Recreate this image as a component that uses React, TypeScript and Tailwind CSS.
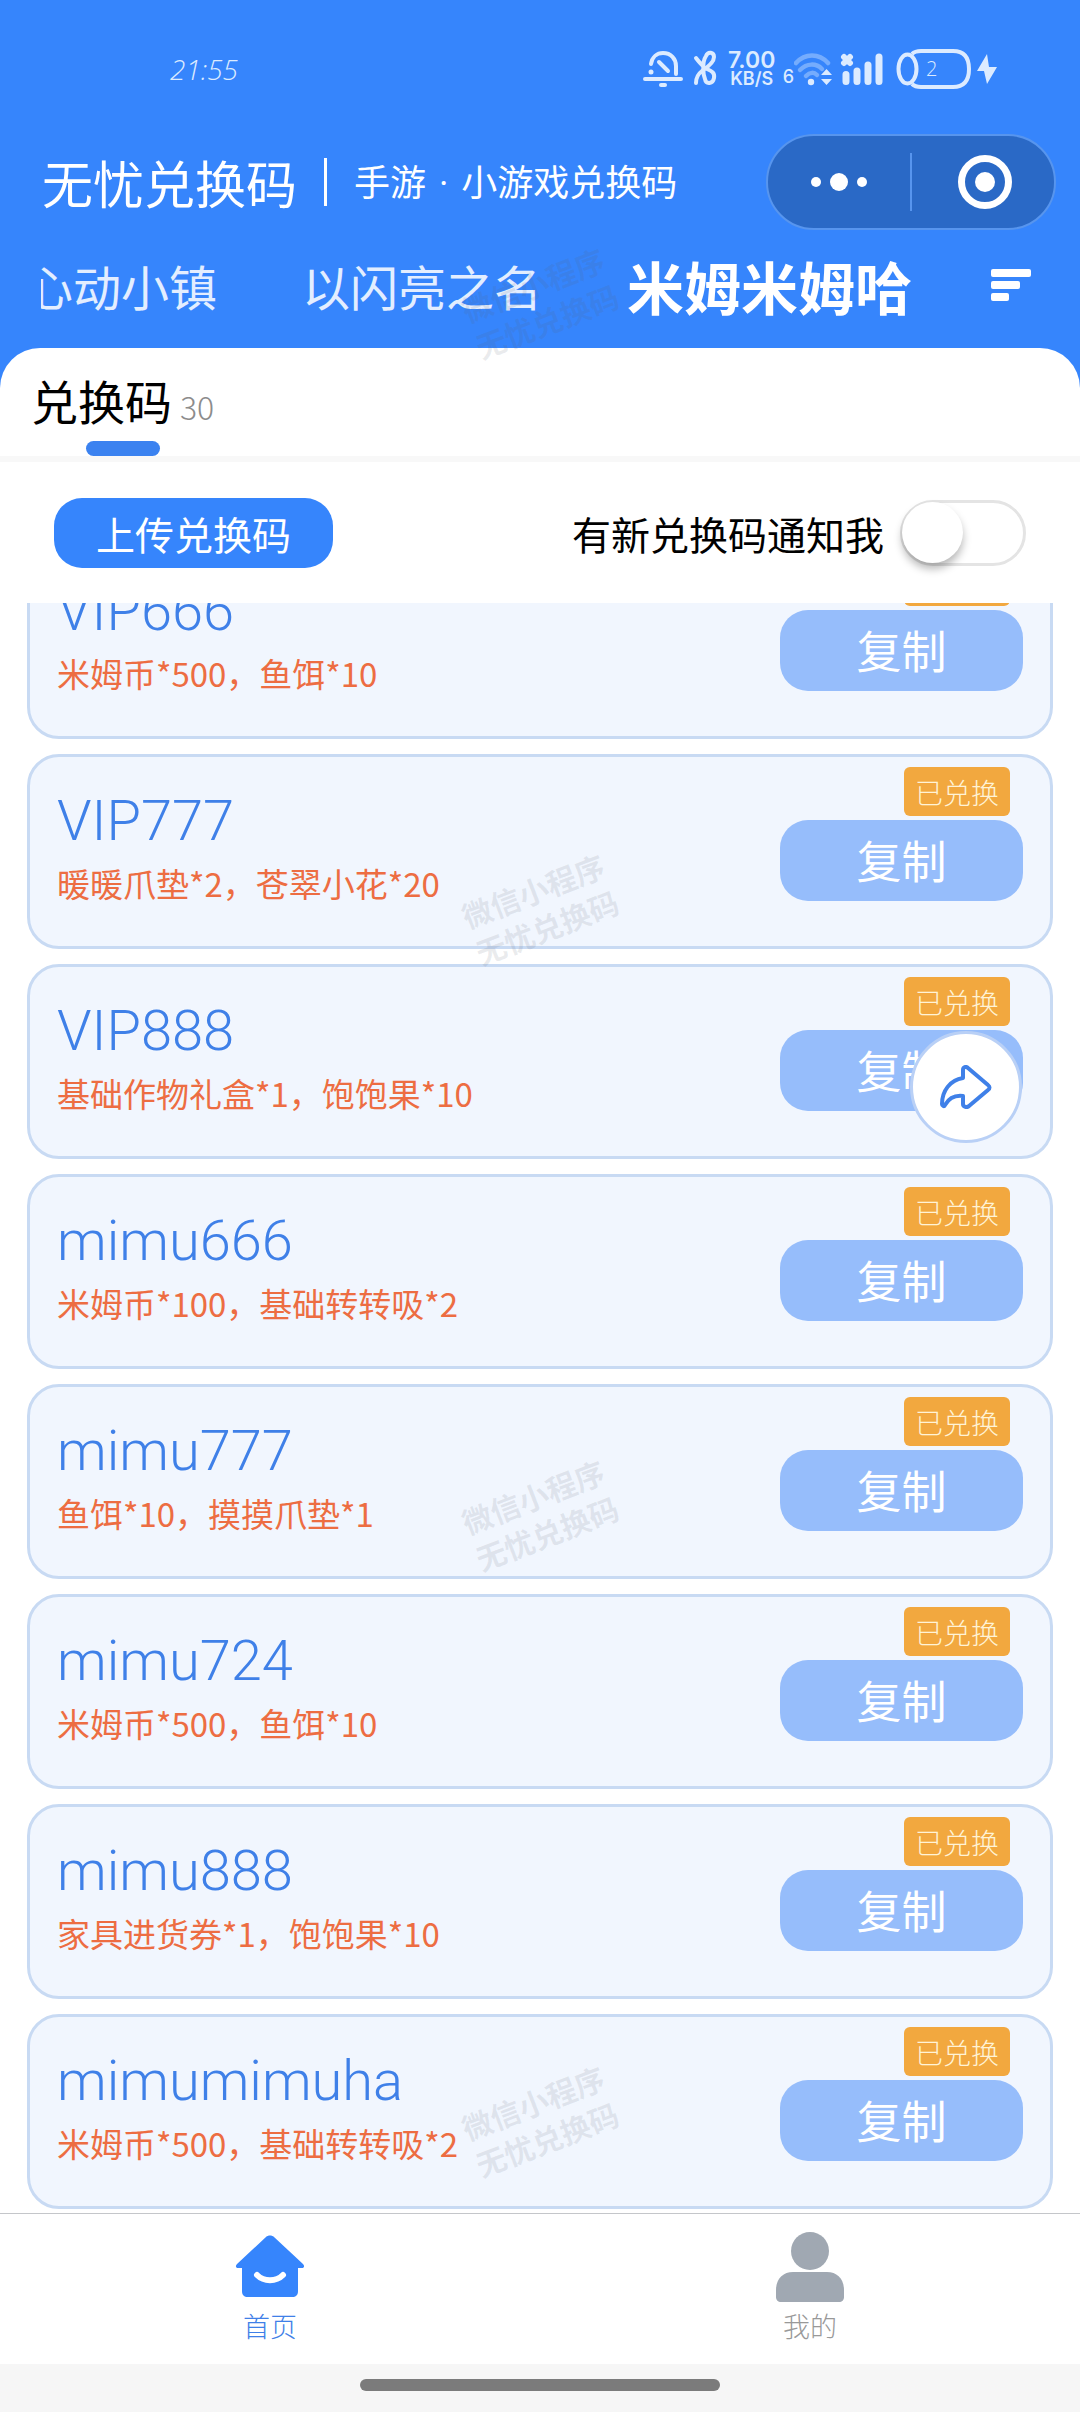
import { useState } from "react";

const games = ["心动小镇", "以闪亮之名", "米姆米姆哈"];

const codes = [
  { code: "VIP666", reward: "米姆币*500，鱼饵*10" },
  { code: "VIP777", reward: "暖暖爪垫*2，苍翠小花*20" },
  { code: "VIP888", reward: "基础作物礼盒*1，饱饱果*10" },
  { code: "mimu666", reward: "米姆币*100，基础转转吸*2" },
  { code: "mimu777", reward: "鱼饵*10，摸摸爪垫*1" },
  { code: "mimu724", reward: "米姆币*500，鱼饵*10" },
  { code: "mimu888", reward: "家具进货券*1，饱饱果*10" },
  { code: "mimumimuha", reward: "米姆币*500，基础转转吸*2" },
];

function StatusBar() {
  return (
    <div className="flex h-[134px] items-center justify-between pt-1 pr-[83px] pl-[170px] text-[#dcebff]">
      <span className="font-['Open_Sans','Liberation_Sans',sans-serif] text-[28px] font-light italic">
        21:55
      </span>
      <div className="flex items-center">
        {/* muted bell */}
        <svg className="h-[38px] w-10" viewBox="0 0 40 38" fill="none" stroke="currentColor" strokeWidth="4" strokeLinecap="round">
          <path d="M8 14C9 7 14 3 20 3c8 0 13 6 13 13v8M16 12l9 9M2 29h36" />
          <path d="M18 35h4" />
          <circle cx="8" cy="22" r="2.5" fill="currentColor" stroke="none" />
        </svg>
        {/* bluetooth */}
        <svg className="ml-2.5 h-[38px] w-6" viewBox="0 0 24 38" fill="none" stroke="currentColor" strokeWidth="4" strokeLinecap="round" strokeLinejoin="round">
          <path d="M3 8c3 4 6 8 11 11 5 2 8 4 7 9-1 6-8 7-9 1C10 24 9 12 13 6c2-5 8-4 8 1 0 5-6 10-12 14-4 3-6 7-6 12" />
        </svg>
        <span className="ml-2.5 flex w-[50px] flex-col items-center font-['Inter','Liberation_Sans',sans-serif] font-semibold">
          <span className="text-[23px] leading-[19px]">7.00</span>
          <span className="text-[18px] leading-[17px]">KB/S</span>
        </span>
        <span className="ml-1.5 mt-4 font-['Inter','Liberation_Sans',sans-serif] text-[18px] leading-4 font-medium">
          6
        </span>
        {/* wifi */}
        <svg className="h-[34px] w-[38px]" viewBox="2 0 38 34" fill="none">
          <g stroke="currentColor" strokeWidth="4.5" strokeLinecap="round" opacity="0.38">
            <path d="M4 11c9-10 23-10 32 0" />
            <path d="M8 18c7-7 16-7 22-1" />
            <path d="M14 24c4-4 8-4 11-1" />
          </g>
          <circle cx="19" cy="30" r="3.2" fill="currentColor" />
          <path d="M29 23l5.500-6 5.500 6zM29 27l5.500 6 5.500-6z" fill="currentColor" />
        </svg>
        {/* signal */}
        <svg className="ml-2 h-8 w-11" viewBox="0 0 44 32" fill="none" stroke="currentColor" strokeWidth="7" strokeLinecap="round">
          <path d="M6 21.500v7M17 18v10.500M28 12v16.500M39 4v24.500" />
          <path d="M4 4l6 6M10 4l-6 6" strokeWidth="6" />
        </svg>
        {/* battery */}
        <svg className="ml-3 h-10 w-[75px]" viewBox="0 0 75 40" fill="none" stroke="currentColor" strokeWidth="4">
          <path d="M16 5c2-2 5-3 9-3h32c10 0 16 5 16 18s-6 18-16 18H25c-4 0-7-1-9-3" />
          <ellipse cx="11.500" cy="20" rx="9" ry="14.500" />
          <text x="30" y="27" fill="currentColor" stroke="none" fontSize="20" fontWeight="300" fontFamily="'Open Sans', sans-serif">
            2
          </text>
        </svg>
        <svg className="ml-1.5 h-8 w-5" viewBox="0 0 20 32" fill="currentColor">
          <path d="M10 1L0 18h7l3 13 10-17h-8z" />
        </svg>
      </div>
    </div>
  );
}

function Header() {
  return (
    <header className="text-white">
      <StatusBar />
      <div className="flex h-24 items-center pr-6 pl-[42px]">
        <h1 className="text-[51px] leading-[60px]">无忧兑换码</h1>
        <span className="ml-[27px] h-12 w-[3px] bg-white" />
        <p className="ml-[27px] flex-1 text-[36px] leading-[48px]">
          手游<span className="px-1 font-['Roboto',sans-serif]"> · </span>小游戏兑换码
        </p>
        <div className="flex h-full w-[290px] items-center rounded-full border-2 border-[#5795ee] bg-[#2a69c6]">
          <button type="button" aria-label="更多" className="flex flex-1 items-center justify-center gap-[9px]">
            <span className="size-2.5 rounded-full bg-white" />
            <span className="size-[18px] rounded-full bg-white" />
            <span className="size-2.5 rounded-full bg-white" />
          </button>
          <span className="h-[58px] w-0.5 bg-[#5795ee]" />
          <button type="button" aria-label="关闭" className="flex flex-1 items-center justify-center">
            <span className="ml-1 flex size-[54px] items-center justify-center rounded-full border-[7px] border-white">
              <span className="size-5 rounded-full bg-white" />
            </span>
          </button>
        </div>
      </div>
      <div className="flex h-[118px] items-center pr-[49px] pb-2 pl-[41px]">
        <nav className="flex flex-1 items-center justify-end gap-[85px] overflow-hidden pr-[79px]">
          {games.map((game, i) => (
            <a
              key={game}
              href="#"
              className={
                i === games.length - 1
                  ? "shrink-0 text-[57px] leading-[72px] font-bold"
                  : "shrink-0 text-[48px] leading-[72px] text-[#e3eeff]"
              }
            >
              {game}
            </a>
          ))}
        </nav>
        <button type="button" aria-label="全部游戏" className="flex w-10 flex-col gap-1">
          <span className="h-2 w-10 rounded-xs bg-white" />
          <span className="h-2 w-[29px] rounded-xs bg-white" />
          <span className="h-2 w-[18px] rounded-xs bg-white" />
        </button>
      </div>
    </header>
  );
}

function Toolbar() {
  const [notify, setNotify] = useState(false);

  return (
    <div className="flex h-[141px] items-center justify-between px-[54px]">
      <button type="button" className="h-[70px] w-[279px] rounded-[28px] bg-[#3685fc] text-[39px] leading-[48px] text-white">
        上传兑换码
      </button>
      <label className="flex items-center gap-4 text-[39px] leading-[48px] text-black">
        有新兑换码通知我
        <span className="relative">
          <input
            type="checkbox"
            role="switch"
            checked={notify}
            onChange={(e) => setNotify(e.target.checked)}
            className="peer block h-[66px] w-[126px] appearance-none rounded-full border-3 border-[#e4e4e4] bg-white checked:bg-[#3685fc]"
          />
          <span className="absolute top-0.5 left-0.5 size-[61px] rounded-full bg-white shadow-[0_6px_8px_rgba(0,0,0,0.28)] peer-checked:left-[63px]" />
        </span>
      </label>
    </div>
  );
}

function CodeCard({ code, reward }: { code: string; reward: string }) {
  return (
    <li className="flex shrink-0 justify-between rounded-[32px] border-3 border-[#c8daf3] bg-[#f1f6fe] pt-2.5 pr-[27px] pb-[39px] pl-[27px]">
      <div className="pt-6">
        <h2 className="font-['Roboto',sans-serif] text-[56px] leading-[60px] font-light text-[#3f80e8]">{code}</h2>
        <p className="mt-2 text-[33px] leading-[48px] text-[#ed6d42]">{reward}</p>
      </div>
      <div className="flex flex-col items-end gap-1">
        <span className="mr-[13px] flex h-[49px] w-[106px] items-center justify-center rounded-md bg-[#f2a83f] text-[28px] leading-9 font-light text-[#fff3d6]">
          已兑换
        </span>
        <button type="button" className="h-[81px] w-[243px] rounded-[28px] bg-[#96bdfb] pb-0.5 text-[45px] leading-[60px] text-white">
          复制
        </button>
      </div>
    </li>
  );
}

function ShareButton() {
  return (
    <button
      type="button"
      aria-label="分享"
      className="fixed right-[58px] bottom-[1269px] flex size-28 items-center justify-center rounded-full border-3 border-[#b9d0f6] bg-white"
    >
      <svg className="h-11 w-[52px]" viewBox="0 0 52 44" fill="none" stroke="#3f80e8" strokeWidth="4" strokeLinejoin="round">
        <path d="M23 5c0-3 3-4 5-2l20 17c2 1.500 2 3.500 0 5L29 41c-2 2-6 1-6-2v-8c-8-1-14 2-18 9-1 2-3 1-3-1 0-13 8-24 21-26z" />
      </svg>
    </button>
  );
}

function TabBar() {
  return (
    <footer>
      <nav className="flex h-[151px] border-t border-[#c4c6ca] bg-white text-[27px] leading-8 font-light">
        <a href="#" className="flex flex-1 flex-col items-center pt-[18px] text-[#3f80e8]">
          <svg className="h-[70px] w-[70px]" viewBox="0 0 70 70">
            <path
              d="M31 5c2-2 6-2 8 0l29 27c2 2 1 4-1 4h-4v23c0 4-2 6-6 6H13c-4 0-6-2-6-6V36H3c-2 0-3-2-1-4z"
              fill="#3685fc"
            />
            <path d="M22 43c7 7 19 7 26 0" fill="none" stroke="#fff" strokeWidth="6" strokeLinecap="round" />
          </svg>
          <span className="mt-2">首页</span>
        </a>
        <a href="#" className="flex flex-1 flex-col items-center pt-[18px] text-[#999]">
          <svg className="h-[70px] w-[70px]" viewBox="0 0 70 70" fill="#a0a8b2">
            <circle cx="35" cy="19" r="19" />
            <path d="M18 40h34c10 0 17 7 17 18v7c0 3-2 5-5 5H6c-3 0-5-2-5-5v-7c0-11 7-18 17-18z" />
          </svg>
          <span className="mt-2">我的</span>
        </a>
      </nav>
      <div className="flex h-12 items-center justify-center bg-[#f6f6f6] pb-1.5">
        <span className="h-3 w-1/3 rounded-full bg-[#7b7b7b]" />
      </div>
    </footer>
  );
}

function Watermark() {
  return (
    <div aria-hidden="true" className="pointer-events-none absolute inset-0 flex flex-col items-center overflow-hidden">
      {[0, 1, 2, 3].map((n) => (
        <div key={n} className="flex h-[606px] shrink-0 items-center">
          <p className="-rotate-21 text-[30px] leading-[39px] font-bold text-[#5a5f70]/12">
            微信小程序
            <br />
            无忧兑换码
          </p>
        </div>
      ))}
    </div>
  );
}

export default function App() {
  return (
    <div className="relative flex h-screen flex-col bg-white font-['Noto_Sans_CJK_SC',sans-serif]">
      <div className="bg-[#3685fc]">
        <Header />
        <div className="rounded-t-[40px] border-b-[6px] border-[#f8f8f8] bg-white px-[31px] pt-6">
          <button type="button" className="flex flex-col items-center">
            <span className="flex items-baseline gap-2 text-[47px] leading-[56px] text-black">
              兑换码
              <span className="text-[32px] leading-10 font-light text-[#8c8c8c]">30</span>
            </span>
            <span className="mt-[13px] h-[15px] w-[74px] rounded-full bg-[#3b82f0]" />
          </button>
        </div>
      </div>
      <Toolbar />
      {/* the list sits at the end of its scroll range */}
      <ul className="flex min-h-0 flex-1 flex-col justify-end gap-[15px] overflow-hidden px-[27px] pb-1">
        {codes.map((item) => (
          <CodeCard key={item.code} {...item} />
        ))}
      </ul>
      <TabBar />
      <Watermark />
      <ShareButton />
    </div>
  );
}
